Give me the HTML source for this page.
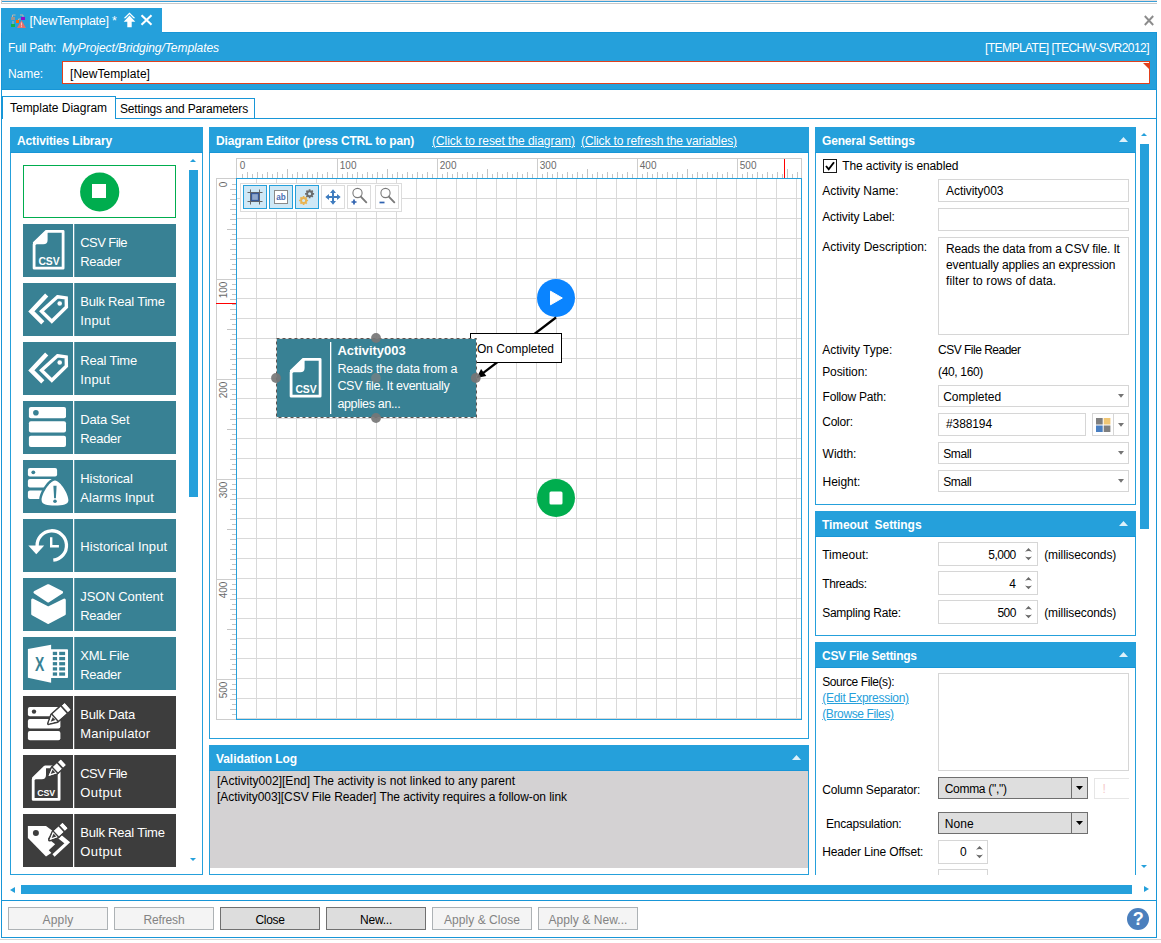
<!DOCTYPE html>
<html><head><meta charset="utf-8"><title>Template</title>
<style>
html,body{margin:0;padding:0;}
body{width:1161px;height:943px;position:relative;overflow:hidden;background:#fff;font-family:"Liberation Sans",sans-serif;font-size:12px;color:#000;}
.a{position:absolute;box-sizing:border-box;}
.t{position:absolute;white-space:pre;}
svg{overflow:visible;}
</style></head><body>
<div class="a" style="left:1px;top:0px;width:1156px;height:1px;background:#e6dedb;"></div>
<div class="a" style="left:1px;top:1px;width:1156px;height:1px;background:#3a9fd8;"></div>
<div class="a" style="left:1px;top:3px;width:1156px;height:1px;background:#c8c8c8;"></div>
<div class="a" style="left:1px;top:0px;width:1px;height:4px;background:#c8c8c8;"></div>
<div class="a" style="left:1px;top:32px;width:1156px;height:906px;border:1px solid #1896d7;"></div>
<div class="a" style="left:0px;top:939px;width:1161px;height:1px;background:#d6d6d6;"></div>
<div class="a" style="left:1px;top:32px;width:1156px;height:58px;background:#25a0db;border:1px solid #1896d7;"></div>
<div class="a" style="left:1px;top:8px;width:161px;height:25px;background:#25a0db;"></div>
<svg class="a" style="left:11px;top:13px;" width="16" height="16" viewBox="0 0 16 16">
<path d="M1.5 4.5v-2.5h3M9 2h3v2.500" fill="none" stroke="#b9b4ae" stroke-width="1"/>
<path d="M2 8v4" stroke="#b9b4ae" stroke-width="1" fill="none"/>
<path d="M7.500 7.500v-1.500h2" stroke="#b9b4ae" stroke-width="1" fill="none"/>
<rect x="0" y="4" width="4" height="3" fill="#9a9593"/>
<rect x="10" y="4" width="4" height="3" fill="#8a10c8"/>
<rect x="5" y="7" width="3" height="3" fill="#ff6a00"/>
<rect x="0" y="11" width="4" height="3" fill="#18b04a"/>
<path d="M10.500 7.200L15 15h-9z" fill="#e8706a"/>
<rect x="10" y="9.500" width="1" height="3" fill="#f7c9c4"/><rect x="10" y="13.200" width="1" height="1" fill="#f7c9c4"/>
</svg>
<div class="t" style="left:29.50px;top:12.92px;font-size:12.5px;line-height:16px;color:#fff;letter-spacing:-0.267px;">[NewTemplate] *</div>
<svg class="a" style="left:123px;top:12px;" width="13" height="16" viewBox="0 0 13 16"><path d="M6.500 0.400L12.300 6.200h-1.900L6.500 2.300 2.600 6.200H0.700z" fill="#fff"/><path d="M6.500 3.600L12.300 9.800H8.700v5.400h-4.400V9.800H0.700z" fill="#fff"/></svg>
<svg class="a" style="left:140px;top:14px;" width="13" height="12" viewBox="0 0 13 12"><path d="M1.500 1.200L11.500 10.800M11.500 1.200L1.500 10.800" stroke="#fff" stroke-width="2.100" fill="none"/></svg>
<svg class="a" style="left:1144px;top:15px;" width="10" height="11" viewBox="0 0 10 11"><path d="M0.800 1L9.200 10M9.200 1L0.800 10" stroke="#8c8c8c" stroke-width="1.900" fill="none"/></svg>
<div class="t" style="left:8.00px;top:39.84px;font-size:12px;line-height:16px;color:#fff;letter-spacing:-0.269px;">Full Path:</div>
<div class="t" style="left:62.00px;top:39.84px;font-size:12px;line-height:16px;color:#fff;letter-spacing:-0.070px;font-style:italic;">MyProject/Bridging/Templates</div>
<div class="t" style="left:985.00px;top:39.84px;font-size:12px;line-height:16px;color:#fff;letter-spacing:-0.549px;">[TEMPLATE] [TECHW-SVR2012]</div>
<div class="t" style="left:8.00px;top:66.34px;font-size:12px;line-height:16px;color:#fff;letter-spacing:-0.069px;">Name:</div>
<div class="a" style="left:62px;top:61px;width:1088px;height:23px;background:#fff;border:1px solid #e2401c;"></div>
<svg class="a" style="left:1142.5px;top:62.5px;" width="6" height="6" viewBox="0 0 6 6"><path d="M0 0h6v6z" fill="#e2401c"/></svg>
<div class="t" style="left:70.00px;top:65.84px;font-size:12px;line-height:16px;color:#000;letter-spacing:0.049px;">[NewTemplate]</div>
<div class="a" style="left:2px;top:118px;width:1154px;height:1px;background:#1896d7;"></div>
<div class="a" style="left:115px;top:98px;width:140px;height:21px;background:#fff;border:1px solid #1896d7;"></div>
<div class="a" style="left:2px;top:96px;width:114px;height:23px;background:#fff;border:1px solid #1896d7;border-bottom:none;"></div>
<div class="t" style="left:10.00px;top:99.84px;font-size:12px;line-height:16px;color:#000;letter-spacing:-0.023px;">Template Diagram</div>
<div class="t" style="left:120.00px;top:101.34px;font-size:12px;line-height:16px;color:#000;letter-spacing:-0.177px;">Settings and Parameters</div>
<div class="a" style="left:10px;top:127px;width:193px;height:748px;background:#fff;border:1px solid #25a0db;"></div>
<div class="a" style="left:10px;top:127px;width:193px;height:26px;background:#25a0db;"></div>
<div class="a" style="left:10px;top:152px;width:193px;height:1px;background:#1896d7;"></div>
<div class="t" style="left:17.00px;top:132.84px;font-size:12px;line-height:16px;color:#fff;letter-spacing:-0.132px;font-weight:bold;">Activities Library</div>
<svg class="a" style="left:190px;top:159px;" width="6" height="3" viewBox="0 0 6 3"><path d="M0 3L3 0 6 3z" fill="#25a0db"/></svg>
<div class="a" style="left:189px;top:170px;width:9px;height:327px;background:#25a0db;"></div>
<svg class="a" style="left:190px;top:858px;" width="6" height="3" viewBox="0 0 6 3"><path d="M0 0L3 3 6 0z" fill="#25a0db"/></svg>
<div class="a" style="left:23px;top:165px;width:153px;height:53px;background:#fff;border:1px solid #00ad4e;"></div>
<svg class="a" style="left:80px;top:172px;" width="40" height="40" viewBox="0 0 40 40"><circle cx="19.700" cy="20" r="19.600" fill="#00ad4e"/><rect x="12" y="12" width="14" height="14" fill="#fff"/></svg>
<div class="a" style="left:23px;top:224px;width:153px;height:53px;background:#388194;"></div>
<div class="a" style="left:73px;top:224px;width:1px;height:53px;background:#fff;"></div>
<div class="a" style="left:74px;top:224px;width:1px;height:53px;background:rgba(255,255,255,0.25);"></div>
<svg class="a" style="left:23px;top:224px;" width="50" height="53" viewBox="0 0 50 53"><path d="M24 7.300H40.100V44.200H11.100V20.500Z" fill="none" stroke="#fff" stroke-width="2.800" stroke-linejoin="round"/><path d="M23.300 7.300V16Q23.300 19 20.300 19H11.100Z" fill="#fff" stroke="#fff" stroke-width="2.600" stroke-linejoin="round"/><text x="26.050" y="40.700" font-family="Liberation Sans,sans-serif" font-weight="bold" font-size="11" fill="#fff" text-anchor="middle" textLength="21.300" lengthAdjust="spacingAndGlyphs">CSV</text></svg>
<div class="t" style="left:80.30px;top:233.80px;font-size:13px;line-height:17px;color:#fff;letter-spacing:-0.586px;">CSV File</div>
<div class="t" style="left:80.30px;top:252.80px;font-size:13px;line-height:17px;color:#fff;letter-spacing:-0.339px;">Reader</div>
<div class="a" style="left:23px;top:283px;width:153px;height:53px;background:#388194;"></div>
<div class="a" style="left:73px;top:283px;width:1px;height:53px;background:#fff;"></div>
<div class="a" style="left:74px;top:283px;width:1px;height:53px;background:rgba(255,255,255,0.25);"></div>
<svg class="a" style="left:23px;top:283px;" width="50" height="53" viewBox="0 0 50 53"><path d="M34.500 13.800L43.200 14.900 43.400 24 28.800 38.300 18.500 28.300Z" fill="none" stroke="#fff" stroke-width="3.400" stroke-linejoin="miter"/><circle cx="36.700" cy="20.500" r="2.300" fill="#fff"/><path d="M23.700 12L8.300 28.400 19.800 39.900" fill="none" stroke="#fff" stroke-width="4.400"/></svg>
<div class="t" style="left:80.30px;top:292.80px;font-size:13px;line-height:17px;color:#fff;letter-spacing:-0.216px;">Bulk Real Time</div>
<div class="t" style="left:80.30px;top:311.80px;font-size:13px;line-height:17px;color:#fff;letter-spacing:0.137px;">Input</div>
<div class="a" style="left:23px;top:342px;width:153px;height:53px;background:#388194;"></div>
<div class="a" style="left:73px;top:342px;width:1px;height:53px;background:#fff;"></div>
<div class="a" style="left:74px;top:342px;width:1px;height:53px;background:rgba(255,255,255,0.25);"></div>
<svg class="a" style="left:23px;top:342px;" width="50" height="53" viewBox="0 0 50 53"><path d="M34.500 13.800L43.200 14.900 43.400 24 28.800 38.300 18.500 28.300Z" fill="none" stroke="#fff" stroke-width="3.400" stroke-linejoin="miter"/><circle cx="36.700" cy="20.500" r="2.300" fill="#fff"/><path d="M23.700 12L8.300 28.400 19.800 39.900" fill="none" stroke="#fff" stroke-width="4.400"/></svg>
<div class="t" style="left:80.30px;top:351.80px;font-size:13px;line-height:17px;color:#fff;letter-spacing:-0.202px;">Real Time</div>
<div class="t" style="left:80.30px;top:370.80px;font-size:13px;line-height:17px;color:#fff;letter-spacing:0.137px;">Input</div>
<div class="a" style="left:23px;top:401px;width:153px;height:53px;background:#388194;"></div>
<div class="a" style="left:73px;top:401px;width:1px;height:53px;background:#fff;"></div>
<div class="a" style="left:74px;top:401px;width:1px;height:53px;background:rgba(255,255,255,0.25);"></div>
<svg class="a" style="left:23px;top:401px;" width="50" height="53" viewBox="0 0 50 53"><rect x="5.9" y="6" width="37.1" height="11.3" rx="2" fill="#fff"/><rect x="5.9" y="20.3" width="37.1" height="11.3" rx="2" fill="#fff"/><rect x="5.9" y="34.7" width="37.1" height="11.3" rx="2" fill="#fff"/><circle cx="12.9" cy="11.8" r="2.8" fill="#388194"/></svg>
<div class="t" style="left:80.30px;top:410.80px;font-size:13px;line-height:17px;color:#fff;letter-spacing:-0.198px;">Data Set</div>
<div class="t" style="left:80.30px;top:429.80px;font-size:13px;line-height:17px;color:#fff;letter-spacing:-0.339px;">Reader</div>
<div class="a" style="left:23px;top:460px;width:153px;height:53px;background:#388194;"></div>
<div class="a" style="left:73px;top:460px;width:1px;height:53px;background:#fff;"></div>
<div class="a" style="left:74px;top:460px;width:1px;height:53px;background:rgba(255,255,255,0.25);"></div>
<svg class="a" style="left:23px;top:460px;" width="50" height="53" viewBox="0 0 50 53"><rect x="4.9" y="8" width="29.2" height="8.5" rx="2" fill="#fff"/><rect x="4.9" y="19.1" width="29.2" height="8.5" rx="2" fill="#fff"/><rect x="4.9" y="30.6" width="29.2" height="8.5" rx="2" fill="#fff"/><circle cx="10.3" cy="12.3" r="1.9" fill="#388194"/><path d="M32 20.600C37.500 21 45.600 34.500 45.400 40.200C45.300 44.500 40 45.400 32 45.400C24 45.400 18.700 44.500 18.600 40.200C18.400 34.500 26.500 21 32 20.600Z" fill="#fff" stroke="#388194" stroke-width="5" stroke-linejoin="round"/><path d="M32 20.600C37.500 21 45.600 34.500 45.400 40.200C45.300 44.500 40 45.400 32 45.400C24 45.400 18.700 44.500 18.600 40.200C18.400 34.500 26.500 21 32 20.600Z" fill="#fff"/><path d="M30.400 25.800H33.600L32.900 38.200H31.100Z" fill="#388194"/><circle cx="32" cy="41.300" r="1.800" fill="#388194"/></svg>
<div class="t" style="left:80.30px;top:469.80px;font-size:13px;line-height:17px;color:#fff;letter-spacing:-0.095px;">Historical</div>
<div class="t" style="left:80.30px;top:488.80px;font-size:13px;line-height:17px;color:#fff;letter-spacing:0.044px;">Alarms Input</div>
<div class="a" style="left:23px;top:519px;width:153px;height:53px;background:#388194;"></div>
<div class="a" style="left:73px;top:519px;width:1px;height:53px;background:#fff;"></div>
<div class="a" style="left:74px;top:519px;width:1px;height:53px;background:rgba(255,255,255,0.25);"></div>
<svg class="a" style="left:23px;top:519px;" width="50" height="53" viewBox="0 0 50 53"><path d="M14.100 27A14.700 14.700 0 1 1 30.300 41.100" fill="none" stroke="#fff" stroke-width="3.300"/><path d="M5.300 26.500H21.200L13.300 35.200Z" fill="#fff"/><path d="M28.200 18.200V27.300H35.900" fill="none" stroke="#fff" stroke-width="2.400"/></svg>
<div class="t" style="left:80.30px;top:538.30px;font-size:13px;line-height:17px;color:#fff;letter-spacing:0.051px;">Historical Input</div>
<div class="a" style="left:23px;top:578px;width:153px;height:53px;background:#388194;"></div>
<div class="a" style="left:73px;top:578px;width:1px;height:53px;background:#fff;"></div>
<div class="a" style="left:74px;top:578px;width:1px;height:53px;background:rgba(255,255,255,0.25);"></div>
<svg class="a" style="left:23px;top:578px;" width="50" height="53" viewBox="0 0 50 53"><path d="M25.200 7.700L38.600 14.300 25.200 22.900 12 14.300Z" fill="#fff" stroke="#fff" stroke-width="3" stroke-linejoin="round"/><path d="M9.700 22V35.900L25.200 44.500 41.300 35.900V22L25.200 30Z" fill="#fff" stroke="#fff" stroke-width="3" stroke-linejoin="round"/></svg>
<div class="t" style="left:80.30px;top:587.80px;font-size:13px;line-height:17px;color:#fff;letter-spacing:-0.068px;">JSON Content</div>
<div class="t" style="left:80.30px;top:606.80px;font-size:13px;line-height:17px;color:#fff;letter-spacing:-0.339px;">Reader</div>
<div class="a" style="left:23px;top:637px;width:153px;height:53px;background:#388194;"></div>
<div class="a" style="left:73px;top:637px;width:1px;height:53px;background:#fff;"></div>
<div class="a" style="left:74px;top:637px;width:1px;height:53px;background:rgba(255,255,255,0.25);"></div>
<svg class="a" style="left:23px;top:637px;" width="50" height="53" viewBox="0 0 50 53"><rect x="27" y="12.300" width="18" height="28.800" rx="0.800" fill="#fff"/><rect x="29.800" y="14.8" width="4.300" height="3.300" fill="#388194"/><rect x="36.200" y="14.8" width="5.900" height="3.300" fill="#388194"/><rect x="29.800" y="19.95" width="4.300" height="3.300" fill="#388194"/><rect x="36.200" y="19.95" width="5.900" height="3.300" fill="#388194"/><rect x="29.800" y="25.1" width="4.300" height="3.300" fill="#388194"/><rect x="36.200" y="25.1" width="5.900" height="3.300" fill="#388194"/><rect x="29.800" y="30.25" width="4.300" height="3.300" fill="#388194"/><rect x="36.200" y="30.25" width="5.900" height="3.300" fill="#388194"/><rect x="29.800" y="35.4" width="4.300" height="3.300" fill="#388194"/><rect x="36.200" y="35.4" width="5.900" height="3.300" fill="#388194"/><path d="M4.900 11.900L28.100 7.700V45.800L4.900 40.700Z" fill="#fff"/><text x="16.700" y="33.600" font-family="Liberation Sans,sans-serif" font-weight="bold" font-size="19.500" fill="#388194" text-anchor="middle" textLength="9.300" lengthAdjust="spacingAndGlyphs">X</text></svg>
<div class="t" style="left:80.30px;top:646.80px;font-size:13px;line-height:17px;color:#fff;letter-spacing:-0.263px;">XML File</div>
<div class="t" style="left:80.30px;top:665.80px;font-size:13px;line-height:17px;color:#fff;letter-spacing:-0.339px;">Reader</div>
<div class="a" style="left:23px;top:696px;width:153px;height:53px;background:#3d3d3d;"></div>
<div class="a" style="left:73px;top:696px;width:1px;height:53px;background:#fff;"></div>
<div class="a" style="left:74px;top:696px;width:1px;height:53px;background:rgba(255,255,255,0.25);"></div>
<svg class="a" style="left:23px;top:696px;" width="50" height="53" viewBox="0 0 50 53"><rect x="4.9" y="11" width="32.5" height="9.3" rx="2" fill="#fff"/><rect x="4.9" y="23.1" width="32.5" height="9.3" rx="2" fill="#fff"/><rect x="4.9" y="34.9" width="32.5" height="9.3" rx="2" fill="#fff"/><circle cx="11" cy="15.6" r="2.2" fill="#3d3d3d"/><g transform="translate(25.6,27.5) rotate(-42)"><path d="M0 0L8 -4.3 H25.5 V4.3 H8Z" fill="#fff" stroke="#3d3d3d" stroke-width="3.200" stroke-linejoin="round" paint-order="stroke"/><path d="M0 0L8 -4.3 H25.5 V4.3 H8Z" fill="#fff"/><path d="M2.800 0L7.300 -2V2Z" fill="#3d3d3d"/><path d="M8.600 -5V5" stroke="#3d3d3d" stroke-width="1.400"/><path d="M21 -5V5" stroke="#3d3d3d" stroke-width="1.700"/></g></svg>
<div class="t" style="left:80.30px;top:705.80px;font-size:13px;line-height:17px;color:#fff;letter-spacing:-0.173px;">Bulk Data</div>
<div class="t" style="left:80.30px;top:724.80px;font-size:13px;line-height:17px;color:#fff;letter-spacing:0.189px;">Manipulator</div>
<div class="a" style="left:23px;top:755px;width:153px;height:53px;background:#3d3d3d;"></div>
<div class="a" style="left:73px;top:755px;width:1px;height:53px;background:#fff;"></div>
<div class="a" style="left:74px;top:755px;width:1px;height:53px;background:rgba(255,255,255,0.25);"></div>
<svg class="a" style="left:23px;top:755px;" width="50" height="53" viewBox="0 0 50 53"><path d="M22.400 11.900H36.100V44.400H10.200V24.400Z" fill="none" stroke="#fff" stroke-width="2.800" stroke-linejoin="round"/><path d="M21.800 11.900V20Q21.800 23 18.800 23H10.200Z" fill="#fff" stroke="#fff" stroke-width="2.400" stroke-linejoin="round"/><text x="23.200" y="41" font-family="Liberation Sans,sans-serif" font-weight="bold" font-size="9" fill="#fff" text-anchor="middle" textLength="18" lengthAdjust="spacingAndGlyphs">CSV</text><g transform="translate(25.6,21) rotate(-43)"><path d="M0 0L8 -3.55 H20 V3.55 H8Z" fill="#fff" stroke="#3d3d3d" stroke-width="3.200" stroke-linejoin="round" paint-order="stroke"/><path d="M0 0L8 -3.55 H20 V3.55 H8Z" fill="#fff"/><path d="M2.800 0L7.300 -2V2Z" fill="#3d3d3d"/><path d="M8.600 -5V5" stroke="#3d3d3d" stroke-width="1.400"/><path d="M15.5 -5V5" stroke="#3d3d3d" stroke-width="1.700"/></g></svg>
<div class="t" style="left:80.30px;top:764.80px;font-size:13px;line-height:17px;color:#fff;letter-spacing:-0.586px;">CSV File</div>
<div class="t" style="left:80.30px;top:783.80px;font-size:13px;line-height:17px;color:#fff;letter-spacing:0.396px;">Output</div>
<div class="a" style="left:23px;top:814px;width:153px;height:53px;background:#3d3d3d;"></div>
<div class="a" style="left:73px;top:814px;width:1px;height:53px;background:#fff;"></div>
<div class="a" style="left:74px;top:814px;width:1px;height:53px;background:rgba(255,255,255,0.25);"></div>
<svg class="a" style="left:23px;top:814px;" width="50" height="53" viewBox="0 0 50 53"><path d="M4.900 12H23L44.700 27.900 23 42.500 4.900 24Z" fill="#fff"/><circle cx="12.900" cy="19" r="3" fill="#3d3d3d"/><path d="M27 22L37 30 28 38.500" fill="none" stroke="#3d3d3d" stroke-width="6.500"/><path d="M36.500 21.500L44.700 28.300 30.500 41.500" fill="none" stroke="#fff" stroke-width="3.200"/><g transform="translate(26.6,25.9) rotate(-43)"><path d="M0 0L8 -3.55 H21 V3.55 H8Z" fill="#fff" stroke="#3d3d3d" stroke-width="3.200" stroke-linejoin="round" paint-order="stroke"/><path d="M0 0L8 -3.55 H21 V3.55 H8Z" fill="#fff"/><path d="M2.800 0L7.300 -2V2Z" fill="#3d3d3d"/><path d="M8.600 -5V5" stroke="#3d3d3d" stroke-width="1.400"/><path d="M16.5 -5V5" stroke="#3d3d3d" stroke-width="1.700"/></g></svg>
<div class="t" style="left:80.30px;top:823.80px;font-size:13px;line-height:17px;color:#fff;letter-spacing:-0.216px;">Bulk Real Time</div>
<div class="t" style="left:80.30px;top:842.80px;font-size:13px;line-height:17px;color:#fff;letter-spacing:0.396px;">Output</div>
<div class="a" style="left:209px;top:127px;width:600px;height:612px;background:#fff;border:1px solid #25a0db;"></div>
<div class="a" style="left:209px;top:127px;width:600px;height:26px;background:#25a0db;"></div>
<div class="a" style="left:209px;top:152px;width:600px;height:1px;background:#1896d7;"></div>
<div class="t" style="left:216.00px;top:132.84px;font-size:12px;line-height:16px;color:#fff;letter-spacing:-0.171px;font-weight:bold;">Diagram Editor (press CTRL to pan)</div>
<div class="t" style="left:432.00px;top:132.84px;font-size:12px;line-height:16px;color:#fff;letter-spacing:-0.037px;text-decoration:underline;">(Click to reset the diagram)</div>
<div class="t" style="left:581.00px;top:132.84px;font-size:12px;line-height:16px;color:#fff;letter-spacing:-0.106px;text-decoration:underline;">(Click to refresh the variables)</div>
<div class="a" style="left:236px;top:178px;width:566px;height:542px;background:#fff;border:1px solid #25a0db;background-image:linear-gradient(to right,#d9d9d9 1px,transparent 1px),linear-gradient(to bottom,#d9d9d9 1px,transparent 1px);background-size:20px 20px;background-position:19px 19px;background-origin:padding-box;"></div>
<div class="a" style="left:236px;top:158px;width:566px;height:20px;border:1px solid #cdcdcd;border-bottom:none;"></div>
<svg class="a" style="left:0px;top:0px;pointer-events:none;" width="1161" height="943" viewBox="0 0 1161 943"><path d="M242.5 174V178M252.5 174V178M262.5 174V178M272.5 174V178M282.5 174V178M292.5 174V178M302.5 174V178M312.5 174V178M322.5 174V178M332.5 174V178M342.5 174V178M352.5 174V178M362.5 174V178M372.5 174V178M382.5 174V178M392.5 174V178M402.5 174V178M412.5 174V178M422.5 174V178M432.5 174V178M442.5 174V178M452.5 174V178M462.5 174V178M472.5 174V178M482.5 174V178M492.5 174V178M502.5 174V178M512.5 174V178M522.5 174V178M532.5 174V178M542.5 174V178M552.5 174V178M562.5 174V178M572.5 174V178M582.5 174V178M592.5 174V178M602.5 174V178M612.5 174V178M622.5 174V178M632.5 174V178M642.5 174V178M652.5 174V178M662.5 174V178M672.5 174V178M682.5 174V178M692.5 174V178M702.5 174V178M712.5 174V178M722.5 174V178M732.5 174V178M742.5 174V178M752.5 174V178M762.5 174V178M772.5 174V178M782.5 174V178M792.5 174V178M247.5 172V178M257.5 172V178M267.5 172V178M277.5 172V178M297.5 172V178M307.5 172V178M317.5 172V178M327.5 172V178M347.5 172V178M357.5 172V178M367.5 172V178M377.5 172V178M397.5 172V178M407.5 172V178M417.5 172V178M427.5 172V178M447.5 172V178M457.5 172V178M467.5 172V178M477.5 172V178M497.5 172V178M507.5 172V178M517.5 172V178M527.5 172V178M547.5 172V178M557.5 172V178M567.5 172V178M577.5 172V178M597.5 172V178M607.5 172V178M617.5 172V178M627.5 172V178M647.5 172V178M657.5 172V178M667.5 172V178M677.5 172V178M697.5 172V178M707.5 172V178M717.5 172V178M727.5 172V178M747.5 172V178M757.5 172V178M767.5 172V178M777.5 172V178M797.5 172V178M287.5 169V178M387.5 169V178M487.5 169V178M587.5 169V178M687.5 169V178M787.5 169V178" stroke="#c4c4c4" stroke-width="1" fill="none" shape-rendering="crispEdges"/><path d="M337.5 159V178M437.5 159V178M537.5 159V178M637.5 159V178M737.5 159V178" stroke="#cdcdcd" stroke-width="1" fill="none" shape-rendering="crispEdges"/><text x="239.8" y="168.600" font-size="10" fill="#6a6a6a" font-family="Liberation Sans,sans-serif">0</text><text x="339.8" y="168.600" font-size="10" fill="#6a6a6a" font-family="Liberation Sans,sans-serif">100</text><text x="439.8" y="168.600" font-size="10" fill="#6a6a6a" font-family="Liberation Sans,sans-serif">200</text><text x="539.8" y="168.600" font-size="10" fill="#6a6a6a" font-family="Liberation Sans,sans-serif">300</text><text x="639.8" y="168.600" font-size="10" fill="#6a6a6a" font-family="Liberation Sans,sans-serif">400</text><text x="739.8" y="168.600" font-size="10" fill="#6a6a6a" font-family="Liberation Sans,sans-serif">500</text><path d="M784.500 159V178" stroke="#f00" stroke-width="1" shape-rendering="crispEdges"/></svg>
<div class="a" style="left:216px;top:178px;width:21px;height:542px;border:1px solid #cdcdcd;border-right:none;"></div>
<svg class="a" style="left:0px;top:0px;pointer-events:none;" width="1161" height="943" viewBox="0 0 1161 943"><path d="M232 184.5H236M232 194.5H236M232 204.5H236M232 214.5H236M232 224.5H236M232 234.5H236M232 244.5H236M232 254.5H236M232 264.5H236M232 274.5H236M232 284.5H236M232 294.5H236M232 304.5H236M232 314.5H236M232 324.5H236M232 334.5H236M232 344.5H236M232 354.5H236M232 364.5H236M232 374.5H236M232 384.5H236M232 394.5H236M232 404.5H236M232 414.5H236M232 424.5H236M232 434.5H236M232 444.5H236M232 454.5H236M232 464.5H236M232 474.5H236M232 484.5H236M232 494.5H236M232 504.5H236M232 514.5H236M232 524.5H236M232 534.5H236M232 544.5H236M232 554.5H236M232 564.5H236M232 574.5H236M232 584.5H236M232 594.5H236M232 604.5H236M232 614.5H236M232 624.5H236M232 634.5H236M232 644.5H236M232 654.5H236M232 664.5H236M232 674.5H236M232 684.5H236M232 694.5H236M232 704.5H236M232 714.5H236M230 189.5H236M230 199.5H236M230 209.5H236M230 219.5H236M230 239.5H236M230 249.5H236M230 259.5H236M230 269.5H236M230 289.5H236M230 299.5H236M230 309.5H236M230 319.5H236M230 339.5H236M230 349.5H236M230 359.5H236M230 369.5H236M230 389.5H236M230 399.5H236M230 409.5H236M230 419.5H236M230 439.5H236M230 449.5H236M230 459.5H236M230 469.5H236M230 489.5H236M230 499.5H236M230 509.5H236M230 519.5H236M230 539.5H236M230 549.5H236M230 559.5H236M230 569.5H236M230 589.5H236M230 599.5H236M230 609.5H236M230 619.5H236M230 639.5H236M230 649.5H236M230 659.5H236M230 669.5H236M230 689.5H236M230 699.5H236M230 709.5H236M227 229.5H236M227 329.5H236M227 429.5H236M227 529.5H236M227 629.5H236" stroke="#c4c4c4" stroke-width="1" fill="none" shape-rendering="crispEdges"/><path d="M217 279.5H236M217 379.5H236M217 479.5H236M217 579.5H236M217 679.5H236" stroke="#cdcdcd" stroke-width="1" fill="none" shape-rendering="crispEdges"/><text transform="translate(227.200,181.6) rotate(-90)" text-anchor="end" font-size="10" fill="#6a6a6a" font-family="Liberation Sans,sans-serif">0</text><text transform="translate(227.200,281.6) rotate(-90)" text-anchor="end" font-size="10" fill="#6a6a6a" font-family="Liberation Sans,sans-serif">100</text><text transform="translate(227.200,381.6) rotate(-90)" text-anchor="end" font-size="10" fill="#6a6a6a" font-family="Liberation Sans,sans-serif">200</text><text transform="translate(227.200,481.6) rotate(-90)" text-anchor="end" font-size="10" fill="#6a6a6a" font-family="Liberation Sans,sans-serif">300</text><text transform="translate(227.200,581.6) rotate(-90)" text-anchor="end" font-size="10" fill="#6a6a6a" font-family="Liberation Sans,sans-serif">400</text><text transform="translate(227.200,681.6) rotate(-90)" text-anchor="end" font-size="10" fill="#6a6a6a" font-family="Liberation Sans,sans-serif">500</text><path d="M216 303.500H236" stroke="#f00" stroke-width="1" shape-rendering="crispEdges"/></svg>
<div class="a" style="left:236px;top:178px;width:1px;height:542px;background:#25a0db;"></div>
<div class="a" style="left:240px;top:183px;width:162px;height:29px;background:#fff;border:1px solid #dcdcdc;"></div>
<div class="a" style="left:243px;top:185px;width:24px;height:24px;background:#cfe8f6;border:1px solid #25a0db;"></div>
<div class="a" style="left:269px;top:185px;width:24px;height:24px;background:#cfe8f6;border:1px solid #25a0db;"></div>
<div class="a" style="left:295px;top:185px;width:24px;height:24px;background:#cfe8f6;border:1px solid #25a0db;"></div>
<div class="a" style="left:321px;top:185px;width:24px;height:24px;background:#fff;border:1px solid #dcdcdc;"></div>
<div class="a" style="left:347px;top:185px;width:24px;height:24px;background:#fff;border:1px solid #dcdcdc;"></div>
<div class="a" style="left:375px;top:185px;width:24px;height:24px;background:#fff;border:1px solid #dcdcdc;"></div>
<svg class="a" style="left:243px;top:185px;" width="24" height="24" viewBox="0 0 24 24"><path d="M7.500 4.500V19.500M16.500 4.500V19.500M4.500 7.500H19.500M4.500 16.500H19.500" stroke="#666" stroke-width="1" fill="none"/><rect x="8.500" y="8.500" width="7" height="7" fill="#8fa7cc" stroke="#375a9a" stroke-width="1.300"/></svg>
<svg class="a" style="left:269px;top:185px;" width="24" height="24" viewBox="0 0 24 24"><rect x="5.500" y="5.500" width="13" height="13" fill="#fff" stroke="#8a8a8a" stroke-width="1"/><text x="12" y="15.300" font-size="9" font-weight="bold" fill="#4a6eb4" text-anchor="middle" font-family="Liberation Sans,sans-serif" textLength="9.500" lengthAdjust="spacingAndGlyphs">ab</text></svg>
<svg class="a" style="left:295px;top:185px;" width="24" height="24" viewBox="0 0 24 24"><circle cx="14.6" cy="8.8" r="2.5" fill="none" stroke="#6b6b6b" stroke-width="1.900"/><path d="M17.50 8.80L19.10 8.80M16.65 10.85L17.78 11.98M14.60 11.70L14.60 13.30M12.55 10.85L11.42 11.98M11.70 8.80L10.10 8.80M12.55 6.75L11.42 5.62M14.60 5.90L14.60 4.30M16.65 6.75L17.78 5.62" stroke="#6b6b6b" stroke-width="1.700" fill="none"/><circle cx="8.6" cy="15.5" r="2.5" fill="none" stroke="#e9b351" stroke-width="1.900"/><path d="M11.50 15.50L13.10 15.50M10.65 17.55L11.78 18.68M8.60 18.40L8.60 20.00M6.55 17.55L5.42 18.68M5.70 15.50L4.10 15.50M6.55 13.45L5.42 12.32M8.60 12.60L8.60 11.00M10.65 13.45L11.78 12.32" stroke="#e9b351" stroke-width="1.700" fill="none"/></svg>
<svg class="a" style="left:321px;top:185px;" width="24" height="24" viewBox="0 0 24 24"><path d="M12 4.300L15 8H13V11H16V9L19.700 12 16 15V13H13V16H15L12 19.700 9 16H11V13H8V15L4.300 12 8 9V11H11V8H9Z" fill="#3e7cbf"/></svg>
<svg class="a" style="left:347px;top:185px;" width="24" height="24" viewBox="0 0 24 24"><circle cx="10.500" cy="8" r="4.600" fill="#fff" stroke="#7a7a7a" stroke-width="1.100"/><path d="M13.800 11.600L19.300 17.300" stroke="#7a7a7a" stroke-width="1.900" stroke-linecap="round"/><path d="M4.500 17H9.500M7 14.500V19.500" stroke="#2f62b0" stroke-width="1.700"/></svg>
<svg class="a" style="left:375px;top:185px;" width="24" height="24" viewBox="0 0 24 24"><circle cx="10.500" cy="8" r="4.600" fill="#fff" stroke="#7a7a7a" stroke-width="1.100"/><path d="M13.800 11.600L19.300 17.300" stroke="#7a7a7a" stroke-width="1.900" stroke-linecap="round"/><path d="M4.500 17.500H9.500" stroke="#2f62b0" stroke-width="1.700"/></svg>
<svg class="a" style="left:536px;top:278px;" width="40" height="40" viewBox="0 0 40 40"><circle cx="20" cy="20" r="19" fill="#0a84ff"/><path d="M14.500 13.200L26.300 20 14.500 26.800Z" fill="#fff" stroke="#fff" stroke-width="1" stroke-linejoin="round"/></svg>
<svg class="a" style="left:536px;top:478px;" width="40" height="40" viewBox="0 0 40 40"><circle cx="20" cy="20" r="19" fill="#00ad4e"/><rect x="13.500" y="13.500" width="13" height="13" rx="1.500" fill="#fff"/></svg>
<svg class="a" style="left:0px;top:0px;pointer-events:none;" width="1161" height="943" viewBox="0 0 1161 943"><path d="M556 317.500L482 373.800" stroke="#000" stroke-width="2.200" fill="none"/><path d="M476.500 378L486.300 375.900 481.100 369.100Z" fill="#000"/></svg>
<div class="a" style="left:470px;top:333px;width:92px;height:30px;background:#fff;border:1px solid #000;"></div>
<div class="t" style="left:477.00px;top:340.84px;font-size:12px;line-height:16px;color:#000;letter-spacing:-0.031px;">On Completed</div>
<div class="a" style="left:277px;top:339px;width:199px;height:78px;background:#388194;"></div>
<svg class="a" style="left:276px;top:338px;" width="201" height="80" viewBox="0 0 201 80"><rect x="0.500" y="0.500" width="200" height="79" fill="none" stroke="#5a524e" stroke-width="1" stroke-dasharray="3 3"/></svg>
<div class="a" style="left:330px;top:342px;width:1px;height:72px;background:#fff;"></div>
<div class="a" style="left:331px;top:342px;width:1px;height:72px;background:rgba(255,255,255,0.3);"></div>
<svg class="a" style="left:280.2px;top:352.1px;" width="50" height="53" viewBox="0 0 50 53"><path d="M24 7.300H40.100V44.200H11.100V20.500Z" fill="none" stroke="#fff" stroke-width="2.800" stroke-linejoin="round"/><path d="M23.300 7.300V16Q23.300 19 20.300 19H11.100Z" fill="#fff" stroke="#fff" stroke-width="2.600" stroke-linejoin="round"/><text x="26.050" y="40.700" font-family="Liberation Sans,sans-serif" font-weight="bold" font-size="11" fill="#fff" text-anchor="middle" textLength="21.300" lengthAdjust="spacingAndGlyphs">CSV</text></svg>
<div class="t" style="left:337.40px;top:342.40px;font-size:13px;line-height:17px;color:#fff;letter-spacing:-0.041px;font-weight:bold;">Activity003</div>
<div class="t" style="left:337.40px;top:361.42px;font-size:12.5px;line-height:16px;color:#fff;letter-spacing:-0.175px;">Reads the data from a</div>
<div class="t" style="left:337.40px;top:377.72px;font-size:12.5px;line-height:16px;color:#fff;letter-spacing:-0.296px;">CSV file. It eventually</div>
<div class="t" style="left:337.40px;top:396.02px;font-size:12.5px;line-height:16px;color:#fff;letter-spacing:-0.339px;">applies an...</div>
<svg class="a" style="left:0px;top:0px;pointer-events:none;" width="1161" height="943" viewBox="0 0 1161 943"><circle cx="376" cy="338" r="4.900" fill="rgba(118,118,118,0.92)"/><circle cx="276" cy="378" r="4.900" fill="rgba(118,118,118,0.92)"/><circle cx="475.8" cy="378" r="4.900" fill="rgba(118,118,118,0.92)"/><circle cx="376" cy="418" r="4.900" fill="rgba(118,118,118,0.92)"/><circle cx="376" cy="378" r="4.900" fill="rgba(128,128,128,0.7)"/></svg>
<div class="a" style="left:209px;top:745px;width:600px;height:130px;background:#fff;border:1px solid #25a0db;"></div>
<div class="a" style="left:209px;top:745px;width:600px;height:26px;background:#25a0db;"></div>
<div class="a" style="left:209px;top:770px;width:600px;height:1px;background:#1896d7;"></div>
<div class="t" style="left:216.00px;top:750.84px;font-size:12px;line-height:16px;color:#fff;letter-spacing:-0.072px;font-weight:bold;">Validation Log</div>
<svg class="a" style="left:792px;top:755px;" width="9" height="5" viewBox="0 0 9 5"><path d="M0 5L4.500 0 9 5z" fill="#fff" fill-opacity="0.850"/></svg>
<div class="a" style="left:210px;top:771px;width:598px;height:97px;background:#d4d2d3;"></div>
<div class="t" style="left:217.00px;top:772.84px;font-size:12px;line-height:16px;color:#000;letter-spacing:0.024px;">[Activity002][End] The activity is not linked to any parent</div>
<div class="t" style="left:217.00px;top:788.84px;font-size:12px;line-height:16px;color:#000;letter-spacing:-0.067px;">[Activity003][CSV File Reader] The activity requires a follow-on link</div>
<div class="a" style="left:815px;top:127px;width:321px;height:378px;background:#fff;border:1px solid #25a0db;"></div>
<div class="a" style="left:815px;top:127px;width:321px;height:26px;background:#25a0db;"></div>
<div class="a" style="left:815px;top:152px;width:321px;height:1px;background:#1896d7;"></div>
<div class="t" style="left:822.00px;top:132.84px;font-size:12px;line-height:16px;color:#fff;letter-spacing:-0.166px;font-weight:bold;">General Settings</div>
<svg class="a" style="left:1119px;top:137px;" width="9" height="5" viewBox="0 0 9 5"><path d="M0 5L4.500 0 9 5z" fill="#fff" fill-opacity="0.850"/></svg>
<div class="a" style="left:823px;top:159px;width:14px;height:14px;background:#fff;border:1px solid #1a1a1a;"></div>
<svg class="a" style="left:823px;top:159px;" width="14" height="14" viewBox="0 0 14 14"><path d="M3 7L5.700 10.300 11 3.200" fill="none" stroke="#000" stroke-width="1.900"/></svg>
<div class="t" style="left:842.30px;top:158.44px;font-size:12px;line-height:16px;color:#000;letter-spacing:-0.118px;">The activity is enabled</div>
<div class="t" style="left:822.20px;top:183.24px;font-size:12px;line-height:16px;color:#000;letter-spacing:-0.020px;">Activity Name:</div>
<div class="a" style="left:938px;top:179px;width:191px;height:23px;background:#fff;border:1px solid #d6d6d6;"></div>
<div class="t" style="left:946.00px;top:183.04px;font-size:12px;line-height:16px;color:#000;letter-spacing:-0.057px;">Activity003</div>
<div class="t" style="left:822.20px;top:209.34px;font-size:12px;line-height:16px;color:#000;letter-spacing:-0.096px;">Activity Label:</div>
<div class="a" style="left:938px;top:208px;width:191px;height:23px;background:#fff;border:1px solid #d6d6d6;"></div>
<div class="t" style="left:822.20px;top:238.84px;font-size:12px;line-height:16px;color:#000;letter-spacing:0.015px;">Activity Description:</div>
<div class="a" style="left:938px;top:237px;width:191px;height:98px;background:#fff;border:1px solid #d6d6d6;"></div>
<div class="t" style="left:946.00px;top:240.84px;font-size:12px;line-height:16px;color:#000;letter-spacing:-0.146px;">Reads the data from a CSV file. It</div>
<div class="t" style="left:946.00px;top:256.84px;font-size:12px;line-height:16px;color:#000;letter-spacing:-0.129px;">eventually applies an expression</div>
<div class="t" style="left:946.00px;top:272.84px;font-size:12px;line-height:16px;color:#000;letter-spacing:0.098px;">filter to rows of data.</div>
<div class="t" style="left:822.20px;top:342.04px;font-size:12px;line-height:16px;color:#000;letter-spacing:-0.026px;">Activity Type:</div>
<div class="t" style="left:938.00px;top:342.04px;font-size:12px;line-height:16px;color:#000;letter-spacing:-0.502px;">CSV File Reader</div>
<div class="t" style="left:822.20px;top:364.24px;font-size:12px;line-height:16px;color:#000;letter-spacing:-0.081px;">Position:</div>
<div class="t" style="left:938.00px;top:364.24px;font-size:12px;line-height:16px;color:#000;letter-spacing:-0.337px;">(40, 160)</div>
<div class="t" style="left:822.60px;top:388.54px;font-size:12px;line-height:16px;color:#000;letter-spacing:-0.219px;">Follow Path:</div>
<div class="a" style="left:938px;top:385px;width:191px;height:22px;background:#fff;border:1px solid #d6d6d6;"></div>
<div class="t" style="left:943.20px;top:388.54px;font-size:12px;line-height:16px;color:#000;letter-spacing:-0.014px;">Completed</div>
<svg class="a" style="left:1118px;top:394px;" width="6" height="4" viewBox="0 0 6 4"><path d="M0 0H6L3 3.800Z" fill="#747474"/></svg>
<div class="t" style="left:822.20px;top:413.64px;font-size:12px;line-height:16px;color:#000;letter-spacing:-0.218px;">Color:</div>
<div class="a" style="left:938px;top:413px;width:148px;height:23px;background:#fff;border:1px solid #d6d6d6;"></div>
<div class="t" style="left:946.00px;top:416.24px;font-size:12px;line-height:16px;color:#000;letter-spacing:-0.102px;">#388194</div>
<div class="a" style="left:1092px;top:413px;width:37px;height:23px;background:#fff;border:1px solid #d6d6d6;"></div>
<div class="a" style="left:1113px;top:414px;width:1px;height:21px;background:#d6d6d6;"></div>
<svg class="a" style="left:1096px;top:418px;" width="15" height="14" viewBox="0 0 15 14"><rect x="0" y="0" width="6.700" height="6.500" fill="#7f7f7f"/><rect x="7.700" y="0" width="6.700" height="6.500" fill="#f0c674"/><rect x="0" y="7.500" width="6.700" height="6.500" fill="#4a7fc1"/><rect x="7.700" y="7.500" width="6.700" height="6.500" fill="#7f7f7f"/></svg>
<svg class="a" style="left:1118px;top:422.5px;" width="6" height="4" viewBox="0 0 6 4"><path d="M0 0H6L3 3.800Z" fill="#747474"/></svg>
<div class="t" style="left:822.60px;top:446.44px;font-size:12px;line-height:16px;color:#000;letter-spacing:-0.035px;">Width:</div>
<div class="a" style="left:938px;top:442px;width:191px;height:22px;background:#fff;border:1px solid #d6d6d6;"></div>
<div class="t" style="left:943.20px;top:445.54px;font-size:12px;line-height:16px;color:#000;letter-spacing:-0.361px;">Small</div>
<svg class="a" style="left:1118px;top:451px;" width="6" height="4" viewBox="0 0 6 4"><path d="M0 0H6L3 3.800Z" fill="#747474"/></svg>
<div class="t" style="left:822.60px;top:474.04px;font-size:12px;line-height:16px;color:#000;letter-spacing:-0.060px;">Height:</div>
<div class="a" style="left:938px;top:470px;width:191px;height:22px;background:#fff;border:1px solid #d6d6d6;"></div>
<div class="t" style="left:943.20px;top:473.54px;font-size:12px;line-height:16px;color:#000;letter-spacing:-0.361px;">Small</div>
<svg class="a" style="left:1118px;top:479px;" width="6" height="4" viewBox="0 0 6 4"><path d="M0 0H6L3 3.800Z" fill="#747474"/></svg>
<div class="a" style="left:815px;top:511px;width:321px;height:125px;background:#fff;border:1px solid #25a0db;"></div>
<div class="a" style="left:815px;top:511px;width:321px;height:26px;background:#25a0db;"></div>
<div class="a" style="left:815px;top:536px;width:321px;height:1px;background:#1896d7;"></div>
<div class="t" style="left:822.00px;top:516.84px;font-size:12px;line-height:16px;color:#fff;letter-spacing:-0.056px;font-weight:bold;">Timeout  Settings</div>
<svg class="a" style="left:1119px;top:521px;" width="9" height="5" viewBox="0 0 9 5"><path d="M0 5L4.500 0 9 5z" fill="#fff" fill-opacity="0.850"/></svg>
<div class="t" style="left:822.20px;top:547.44px;font-size:12px;line-height:16px;color:#000;letter-spacing:0.021px;">Timeout:</div>
<div class="a" style="left:938px;top:542px;width:100px;height:24px;background:#fff;border:1px solid #d6d6d6;"></div>
<div class="t" style="left:988.20px;top:547.44px;font-size:12px;line-height:16px;color:#000;letter-spacing:-0.486px;">5,000</div>
<svg class="a" style="left:1025.2px;top:548px;" width="7" height="12" viewBox="0 0 7 12"><path d="M0 3.800L3.500 0 7 3.800Q3.500 2.300 0 3.800Z" fill="#6a6a6a"/><path d="M0 8.600L3.500 12.200 7 8.600Q3.500 10 0 8.600Z" fill="#6a6a6a"/></svg>
<div class="t" style="left:1044.20px;top:547.44px;font-size:12px;line-height:16px;color:#000;letter-spacing:-0.096px;">(milliseconds)</div>
<div class="t" style="left:822.20px;top:576.34px;font-size:12px;line-height:16px;color:#000;letter-spacing:-0.369px;">Threads:</div>
<div class="a" style="left:938px;top:571px;width:100px;height:24px;background:#fff;border:1px solid #d6d6d6;"></div>
<div class="t" style="left:1009.13px;top:576.34px;font-size:12px;line-height:16px;color:#000;">4</div>
<svg class="a" style="left:1025.2px;top:577px;" width="7" height="12" viewBox="0 0 7 12"><path d="M0 3.800L3.500 0 7 3.800Q3.500 2.300 0 3.800Z" fill="#6a6a6a"/><path d="M0 8.600L3.500 12.200 7 8.600Q3.500 10 0 8.600Z" fill="#6a6a6a"/></svg>
<div class="t" style="left:822.20px;top:605.14px;font-size:12px;line-height:16px;color:#000;letter-spacing:-0.246px;">Sampling Rate:</div>
<div class="a" style="left:938px;top:600px;width:100px;height:24px;background:#fff;border:1px solid #d6d6d6;"></div>
<div class="t" style="left:997.40px;top:605.14px;font-size:12px;line-height:16px;color:#000;letter-spacing:-0.540px;">500</div>
<svg class="a" style="left:1025.2px;top:606px;" width="7" height="12" viewBox="0 0 7 12"><path d="M0 3.800L3.500 0 7 3.800Q3.500 2.300 0 3.800Z" fill="#6a6a6a"/><path d="M0 8.600L3.500 12.200 7 8.600Q3.500 10 0 8.600Z" fill="#6a6a6a"/></svg>
<div class="t" style="left:1044.20px;top:605.14px;font-size:12px;line-height:16px;color:#000;letter-spacing:-0.096px;">(milliseconds)</div>
<div class="a" style="left:815px;top:642px;width:321px;height:233px;background:#fff;border:1px solid #25a0db;border-bottom:none;"></div>
<div class="a" style="left:815px;top:642px;width:321px;height:26px;background:#25a0db;"></div>
<div class="a" style="left:815px;top:667px;width:321px;height:1px;background:#1896d7;"></div>
<div class="t" style="left:822.00px;top:647.84px;font-size:12px;line-height:16px;color:#fff;letter-spacing:-0.274px;font-weight:bold;">CSV File Settings</div>
<svg class="a" style="left:1119px;top:652px;" width="9" height="5" viewBox="0 0 9 5"><path d="M0 5L4.500 0 9 5z" fill="#fff" fill-opacity="0.850"/></svg>
<div class="t" style="left:822.20px;top:673.84px;font-size:12px;line-height:16px;color:#000;letter-spacing:-0.401px;">Source File(s):</div>
<div class="t" style="left:822.20px;top:690.24px;font-size:12px;line-height:16px;color:#25a0db;letter-spacing:-0.280px;text-decoration:underline;">(Edit Expression)</div>
<div class="t" style="left:822.20px;top:706.14px;font-size:12px;line-height:16px;color:#25a0db;letter-spacing:-0.370px;text-decoration:underline;">(Browse Files)</div>
<div class="a" style="left:938px;top:673px;width:191px;height:98px;background:#fff;border:1px solid #d6d6d6;"></div>
<div class="t" style="left:822.30px;top:782.34px;font-size:12px;line-height:16px;color:#000;letter-spacing:-0.160px;">Column Separator:</div>
<div class="a" style="left:938px;top:777px;width:150px;height:22px;background:#dedede;border:1px solid #6f6f6f;"></div>
<div class="a" style="left:1071px;top:778px;width:1px;height:20px;background:#6f6f6f;"></div>
<div class="t" style="left:944.70px;top:781.04px;font-size:12px;line-height:16px;color:#000;letter-spacing:-0.290px;">Comma (",")</div>
<svg class="a" style="left:1076px;top:786px;" width="7" height="4" viewBox="0 0 7 4"><path d="M0 0H7L3.500 4Z" fill="#000"/></svg>
<div class="a" style="left:1094px;top:778px;width:35px;height:21px;background:#fff;border:1px solid #e6e6e6;border-right:none;"></div>
<div class="t" style="left:1102.50px;top:781.34px;font-size:12px;line-height:16px;color:#f5caca;">!</div>
<div class="t" style="left:826.10px;top:816.24px;font-size:12px;line-height:16px;color:#000;letter-spacing:-0.244px;">Encapsulation:</div>
<div class="a" style="left:938px;top:812px;width:150px;height:22px;background:#dedede;border:1px solid #6f6f6f;"></div>
<div class="a" style="left:1071px;top:813px;width:1px;height:20px;background:#6f6f6f;"></div>
<div class="t" style="left:944.70px;top:816.04px;font-size:12px;line-height:16px;color:#000;letter-spacing:0.079px;">None</div>
<svg class="a" style="left:1076px;top:821px;" width="7" height="4" viewBox="0 0 7 4"><path d="M0 0H7L3.500 4Z" fill="#000"/></svg>
<div class="t" style="left:822.30px;top:843.84px;font-size:12px;line-height:16px;color:#000;letter-spacing:-0.149px;">Header Line Offset:</div>
<div class="a" style="left:938px;top:840px;width:50px;height:24px;background:#fff;border:1px solid #d6d6d6;"></div>
<div class="t" style="left:960.00px;top:843.84px;font-size:12px;line-height:16px;color:#000;">0</div>
<svg class="a" style="left:975.5px;top:846px;" width="7" height="12" viewBox="0 0 7 12"><path d="M0 3.800L3.500 0 7 3.800Q3.500 2.300 0 3.800Z" fill="#6a6a6a"/><path d="M0 8.600L3.500 12.200 7 8.600Q3.500 10 0 8.600Z" fill="#6a6a6a"/></svg>
<div class="a" style="left:938px;top:869px;width:50px;height:6px;background:#fff;border:1px solid #d6d6d6;border-bottom:none;"></div>
<svg class="a" style="left:1141px;top:133px;" width="6" height="3" viewBox="0 0 6 3"><path d="M0 3L3 0 6 3z" fill="#25a0db"/></svg>
<div class="a" style="left:1140px;top:144px;width:9px;height:385px;background:#25a0db;"></div>
<svg class="a" style="left:1141px;top:865px;" width="6" height="3" viewBox="0 0 6 3"><path d="M0 0L3 3 6 0z" fill="#25a0db"/></svg>
<svg class="a" style="left:10px;top:887px;" width="5" height="6" viewBox="0 0 5 6"><path d="M5 0v6L0 3z" fill="#25a0db"/></svg>
<div class="a" style="left:21px;top:885px;width:1111px;height:9px;background:#25a0db;"></div>
<svg class="a" style="left:1144px;top:886px;" width="5" height="6" viewBox="0 0 5 6"><path d="M0 0v6L5 3z" fill="#25a0db"/></svg>
<div class="a" style="left:2px;top:900px;width:1154px;height:1px;background:#1896d7;"></div>
<div class="a" style="left:8px;top:907px;width:100px;height:23px;background:#f4f4f4;border:1px solid #adb2b5;"></div>
<div class="t" style="left:42.50px;top:911.84px;font-size:12px;line-height:16px;color:#838383;letter-spacing:0.197px;">Apply</div>
<div class="a" style="left:114px;top:907px;width:100px;height:23px;background:#f4f4f4;border:1px solid #adb2b5;"></div>
<div class="t" style="left:143.50px;top:911.84px;font-size:12px;line-height:16px;color:#838383;letter-spacing:-0.145px;">Refresh</div>
<div class="a" style="left:220px;top:907px;width:100px;height:23px;background:#dddddd;border:1px solid #707070;"></div>
<div class="t" style="left:255.50px;top:911.84px;font-size:12px;line-height:16px;color:#000;letter-spacing:-0.336px;">Close</div>
<div class="a" style="left:326px;top:907px;width:100px;height:23px;background:#dddddd;border:1px solid #707070;"></div>
<div class="t" style="left:360.00px;top:911.84px;font-size:12px;line-height:16px;color:#000;letter-spacing:-0.224px;">New...</div>
<div class="a" style="left:432px;top:907px;width:100px;height:23px;background:#f4f4f4;border:1px solid #adb2b5;"></div>
<div class="t" style="left:444.00px;top:911.84px;font-size:12px;line-height:16px;color:#838383;letter-spacing:0.049px;">Apply &amp; Close</div>
<div class="a" style="left:538px;top:907px;width:100px;height:23px;background:#f4f4f4;border:1px solid #adb2b5;"></div>
<div class="t" style="left:548.50px;top:911.84px;font-size:12px;line-height:16px;color:#838383;letter-spacing:0.069px;">Apply &amp; New...</div>
<svg class="a" style="left:1127px;top:908px;" width="22" height="22" viewBox="0 0 22 22"><circle cx="11" cy="11" r="11" fill="#4b7fbd"/><text x="11.200" y="17.300" font-family="Liberation Sans,sans-serif" font-weight="bold" font-size="18" fill="#fff" text-anchor="middle">?</text></svg>
</body></html>
